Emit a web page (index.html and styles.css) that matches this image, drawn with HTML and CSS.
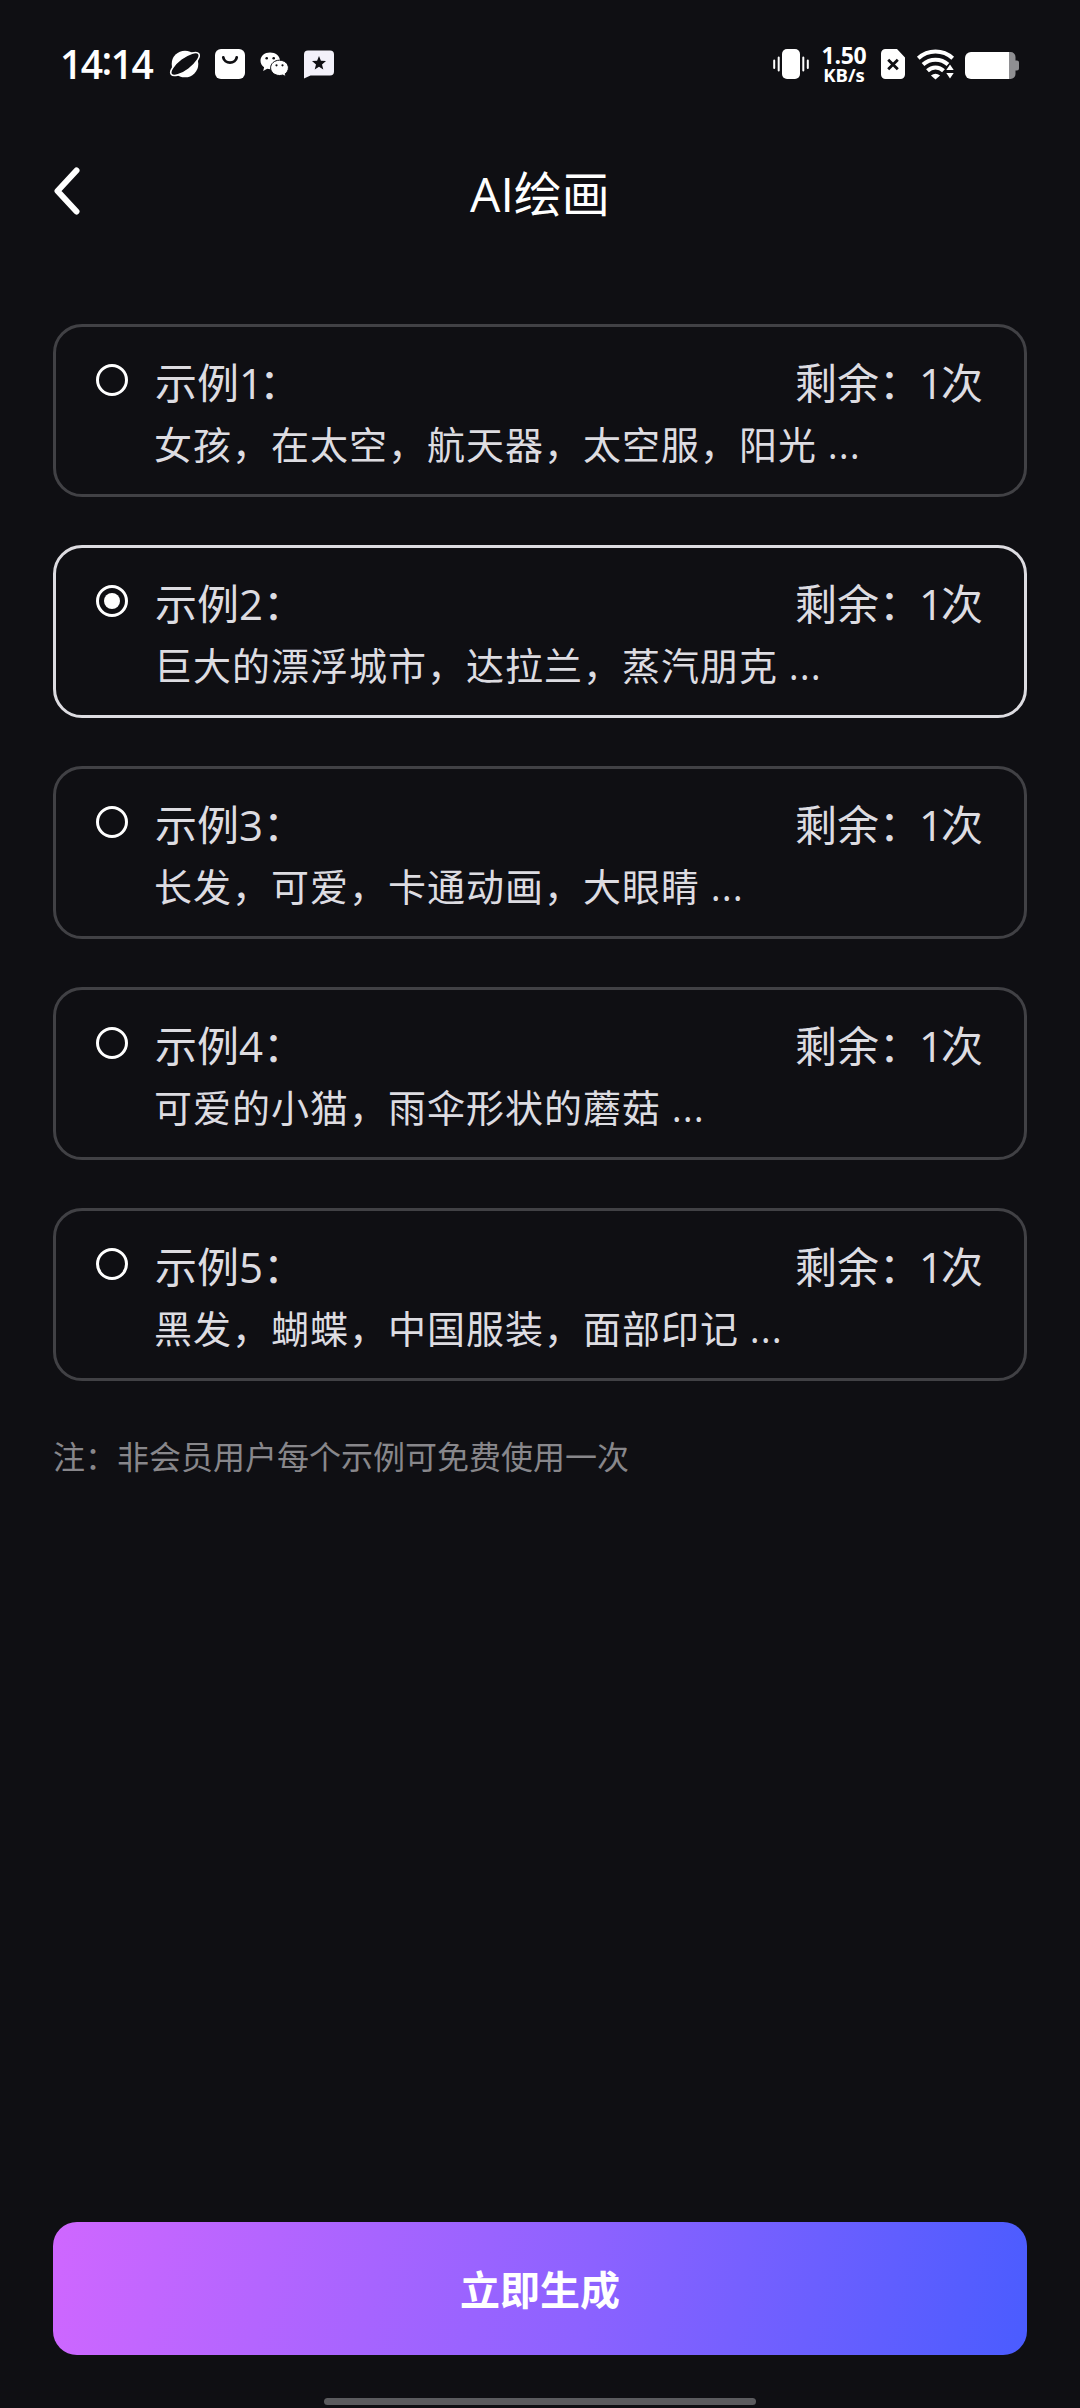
FILE: index.html
```html
<!DOCTYPE html>
<html lang="zh-CN">
<head>
<meta charset="utf-8">
<title>AI绘画</title>
<link rel="stylesheet" href="styles.css">
</head>
<body>
<div class="screen">
  <div class="status">
    <span class="clock">14<span class="colon">:</span>14</span>
    <svg class="ic planet" width="30" height="28" viewBox="0 0 30 28">
      <circle cx="15" cy="14" r="13.3" fill="#fff"/>
      <ellipse cx="15" cy="14" rx="17.2" ry="6.3" transform="rotate(-37 15 14)" fill="#0f0f13" stroke="#fff" stroke-width="1.6"/>
    </svg>
    <svg class="ic bag" width="30" height="30" viewBox="0 0 30 30">
      <rect width="30" height="30" rx="6" fill="#fff"/>
      <path d="M8.3 8.500a6.800 6.200 0 0 0 13.400 0" fill="none" stroke="#0f0f13" stroke-width="2.800" stroke-linecap="round"/>
    </svg>
    <svg class="ic chat" width="29" height="25" viewBox="0 0 29 25">
      <path d="M10 .5C4.600 .5 .5 4 .5 8.700c0 2.700 1.400 5 3.600 6.500L3.200 19l4-2.200c1 .3 2 .4 3 .4C15.600 17.200 20 13.400 20 8.700 20 4 15.600 .5 10 .5z" fill="#fff"/>
      <path d="M19.500 8.200c-5 0-8.900 3.400-8.900 7.600s3.900 7.700 8.900 7.700c1.200 0 2.300-.2 3.300-.5l3.200 1.700-.8-2.900c1.900-1.400 3.200-3.500 3.200-6 0-4.200-4-7.600-8.900-7.600z" fill="#fff" stroke="#0f0f13" stroke-width="1"/>
      <g fill="#0f0f13"><circle cx="6.700" cy="6.300" r="1.300"/><circle cx="13.700" cy="6.300" r="1.300"/><circle cx="16.500" cy="13.300" r="1.100"/><circle cx="22.500" cy="13.300" r="1.100"/></g>
    </svg>
    <svg class="ic star" width="30" height="29" viewBox="0 0 30 29">
      <path d="M4 .5h22a4 4 0 0 1 4 4v17a4 4 0 0 1-4 4H6.500L0 28.500V4.500a4 4 0 0 1 4-4z" fill="#f3f1fa"/>
      <path d="M15 6l1.900 4.800 5.100.3-4 3.300 1.300 5L15 16.700l-4.300 2.700 1.300-5-4-3.300 5.100-.3z" fill="#0f0f13"/>
    </svg>
    <span class="fill"></span>
    <svg class="ic vibrate" width="36" height="30" viewBox="0 0 36 30">
      <rect x="9" width="18" height="30" rx="5" fill="#fff"/>
      <path d="M1.200 11.500v7.500M5.700 8.500v13M30.300 8.500v13M34.800 11.500v7.500" stroke="#fff" stroke-width="2" stroke-linecap="round"/>
    </svg>
    <div class="speed"><span class="rate">1.50</span><span class="unit">KB/s</span></div>
    <svg class="ic sim" width="24" height="30" viewBox="0 0 24 30">
      <path d="M4.500 0H16l8 8.500v17a4.500 4.500 0 0 1-4.500 4.500h-15A4.500 4.500 0 0 1 0 25.500v-21A4.500 4.500 0 0 1 4.500 0z" fill="#fff"/>
      <path d="M7.200 10.700l9.600 9.600M16.800 10.700l-9.600 9.600" stroke="#0f0f13" stroke-width="2.800"/>
    </svg>
    <svg class="ic wifi" width="38" height="30" viewBox="0 0 38 30">
      <g fill="none" stroke="#fff" stroke-width="4">
        <path d="M1.300 9.200a25.500 25.500 0 0 1 34.400 0"/>
        <path d="M6 15.500a18.500 18.500 0 0 1 25 0"/>
        <path d="M10.500 21.700a11.500 11.500 0 0 1 16 0"/>
      </g>
      <path d="M18.500 30.500l-4.600-4q4.600-3.500 9.200 0z" fill="#fff"/>
      <path d="M33 13l5 7v10.500h-9.500V20z" fill="#0f0f13"/>
      <path d="M33 15.500l3.700 5.500h-7.400zM33 29.500l3.700-5.500h-7.400z" fill="#fff"/>
    </svg>
    <svg class="ic battery" width="54" height="27" viewBox="0 0 54 27">
      <path d="M44 0h1.500a5 5 0 0 1 5 5v3.500H52a2 2 0 0 1 2 2v6a2 2 0 0 1-2 2h-1.500V22a5 5 0 0 1-5 5H44z" fill="#8f8f92"/>
      <path d="M6 0h38v27H6a6 6 0 0 1-6-6V6a6 6 0 0 1 6-6z" fill="#fff"/>
    </svg>
  </div>

  <header class="nav">
    <svg class="back" width="28" height="48" viewBox="0 0 28 48"><path d="M23.500 3.500L4.500 24l19 20.500" fill="none" stroke="#fff" stroke-width="6" stroke-linecap="round" stroke-linejoin="round"/></svg>
    <h1 class="title">AI绘画</h1>
  </header>

  <main class="list">
    <div class="card"><span class="radio"></span><div class="body"><div class="head"><span>示例<span class="one">1</span>：</span><span>剩余：<span class="count">1</span>次</span></div><p class="desc">女孩，在太空，航天器，太空服，阳光 ...</p></div></div>
    <div class="card selected"><span class="radio"></span><div class="body"><div class="head"><span>示例2：</span><span>剩余：<span class="count">1</span>次</span></div><p class="desc">巨大的漂浮城市，达拉兰，蒸汽朋克 ...</p></div></div>
    <div class="card"><span class="radio"></span><div class="body"><div class="head"><span>示例3：</span><span>剩余：<span class="count">1</span>次</span></div><p class="desc">长发，可爱，卡通动画，大眼睛 ...</p></div></div>
    <div class="card"><span class="radio"></span><div class="body"><div class="head"><span>示例4：</span><span>剩余：<span class="count">1</span>次</span></div><p class="desc">可爱的小猫，雨伞形状的蘑菇 ...</p></div></div>
    <div class="card"><span class="radio"></span><div class="body"><div class="head"><span>示例5：</span><span>剩余：<span class="count">1</span>次</span></div><p class="desc">黑发，蝴蝶，中国服装，面部印记 ...</p></div></div>
  </main>

  <p class="note">注：非会员用户每个示例可免费使用一次</p>
  <button class="submit">立即生成</button>
  <div class="homebar"></div>
</div>
</body>
</html>
```

FILE: styles.css
```css
* { box-sizing: border-box; margin: 0; padding: 0; }
body { background: #0f0f13; }
.screen {
  width: 1080px; height: 2408px; overflow: hidden;
  display: flex; flex-direction: column;
  background: #0f0f13; color: #dddce1;
  font-family: "Open Sans", "Noto Sans CJK SC", sans-serif;
}
.status { height: 130px; padding: 0 61px 2px 60px; display: flex; align-items: center; color: #fff; flex: none; }
.ic { display: block; flex: none; overflow: visible; }
.clock { width: 110px; font-size: 39px; font-weight: 600; line-height: 40px; letter-spacing: -1.5px; white-space: nowrap; }
.colon { vertical-align: 4px; line-height: 1px; }
.bag { margin-left: 15px; }
.chat { margin-left: 15px; }
.star { margin-left: 15px; }
.fill { flex: 1; }
.speed { width: 48px; margin: 0 13px 0 11px; display: flex; flex-direction: column; align-items: center; white-space: nowrap; }
.rate { font-size: 23px; font-weight: 700; line-height: 20px; letter-spacing: -0.3px; }
.unit { font-size: 18.5px; font-weight: 700; line-height: 19px; }
.wifi { margin-left: 12px; }
.battery { margin-left: 10px; margin-top: 2px; }

.nav { height: 194px; display: grid; grid-template-columns: 140px 1fr 140px; flex: none; }
.back { margin: 37px 0 0 53px; }
.title { margin-top: 29px; text-align: center; color: #fff; font-size: 48px; font-weight: 400; line-height: 70px; }

.list { display: flex; flex-direction: column; gap: 48px; padding: 0 53px; }
.card { height: 173px; border: 3px solid #414145; border-radius: 29px; display: flex; gap: 27px; padding: 25px 41px 0 40px; }
.selected { border-color: #dddce1; }
.radio { width: 32px; height: 32px; margin-top: 12px; border: 3px solid #fff; border-radius: 50%; flex: none; display: grid; place-items: center; }
.selected .radio::after { content: ""; width: 16px; height: 16px; border-radius: 50%; background: #fff; }
.body { flex: 1; white-space: nowrap; }
.head { display: flex; justify-content: space-between; font-size: 42px; line-height: 62px; height: 62px; }
.desc { margin-left: -1px; font-size: 38px; line-height: 60px; height: 60px; letter-spacing: 1px; }
.one { letter-spacing: -4px; }
.count { margin-left: -2px; letter-spacing: -2px; }

.note { margin: 52px 53px 0; color: #88878b; font-size: 32px; line-height: 48px; }
.submit {
  height: 133px; margin: auto 53px 43px; flex: none; border: 0; border-radius: 24px; padding-top: 2px;
  background: linear-gradient(100deg, #cf67ff 0%, #8c62ff 55%, #4a5cff 100%);
  color: #fff; font: 700 40px/60px "Open Sans", "Noto Sans CJK SC", sans-serif;
}
.homebar { width: 432px; height: 7px; margin: 0 auto 3px; border-radius: 4px; background: #5b5b5e; flex: none; }
```
